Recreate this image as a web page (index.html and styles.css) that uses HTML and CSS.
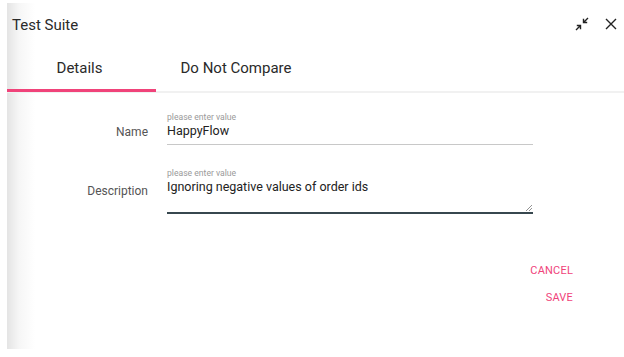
FILE: index.html
```html
<!DOCTYPE html>
<html>
<head>
<meta charset="utf-8">
<link rel="stylesheet" href="styles.css">
</head>
<body>
<div class="panel">
  <div class="header">
    <div class="title">Test Suite</div>
    <div class="actions">
      <svg class="icon" width="14" height="14" viewBox="0 0 14 14">
        <path d="M13 1 L8.5 5.5 M8.5 1.8 V5.5 H12.2" fill="none" stroke="#222" stroke-width="1.4"/>
        <path d="M1 13 L5.5 8.5 M1.8 8.5 H5.5 V12.2" fill="none" stroke="#222" stroke-width="1.4"/>
      </svg>
      <svg class="icon close" width="12" height="12" viewBox="0 0 12 12">
        <path d="M1 1 L11 11 M11 1 L1 11" stroke="#222" stroke-width="1.4"/>
      </svg>
    </div>
  </div>
  <div class="tabs">
    <div class="tab active">Details</div>
    <div class="tab">Do Not Compare</div>
  </div>
  <div class="form">
    <div class="row">
      <div class="label">Name</div>
      <div class="field">
        <div class="hint">please enter value</div>
        <div class="input">HappyFlow</div>
      </div>
    </div>
    <div class="row row2">
      <div class="label">Description</div>
      <div class="field">
        <div class="hint">please enter value</div>
        <div class="textarea">Ignoring negative values of order ids
          <svg class="grip" width="6" height="6" viewBox="0 0 6 6"><path d="M0 6 L6 0 M3 6 L6 3" stroke="#777" stroke-width="0.8"/></svg>
        </div>
      </div>
    </div>
  </div>
  <div class="buttons">
    <div class="btn">CANCEL</div>
    <div class="btn">SAVE</div>
  </div>
</div>
</body>
</html>
```

FILE: styles.css
```css
html, body {
  margin: 0;
  padding: 0;
  background: #fff;
}
body {
  font-family: Roboto, "Liberation Sans", sans-serif;
  color: #212121;
}
.panel {
  margin: 3px 0 0 7px;
  height: 346px;
  background: linear-gradient(to right, #e4e4e4 0px, #f6f6f6 12px, #fff 28px);
}
.header {
  display: flex;
  align-items: center;
  justify-content: space-between;
  height: 42px;
  padding: 0 7px 0 5px;
}
.title {
  font-size: 15px;
  color: #2a2a2a;
  margin-top: 1px;
}
.actions {
  display: flex;
  align-items: center;
  gap: 16px;
}
.icon { display: block; }
.tabs {
  display: flex;
  height: 46px;
  border-bottom: 2px solid #f1f1f1;
}
.tab {
  width: 149px;
  font-size: 15px;
  color: #2a2a2a;
  display: flex;
  align-items: center;
  justify-content: center;
  box-sizing: border-box;
  border-bottom: 3px solid transparent;
  margin-bottom: -1px;
  padding-top: 2px;
}
.tab:first-child { padding-right: 4px; }
.tab + .tab { width: 160px; }
.tab.active {
  border-bottom-color: #f0437a;
}
.form {
  padding-top: 20px;
}
.row {
  display: flex;
  align-items: flex-end;
}
.label {
  width: 141px;
  text-align: right;
  font-size: 12px;
  color: #555;
  padding-right: 19px;
  padding-bottom: 6px;
}
.field {
  width: 366px;
}
.hint {
  font-size: 8.6px;
  color: #9a9a9a;
  line-height: 10px;
  margin-top: -1px;
  padding-bottom: 1px;
}
.input {
  font-size: 12.5px;
  color: #222;
  padding: 0 0 6px;
  border-bottom: 1px solid #c8c8c8;
  line-height: 15px;
}
.row2 {
  margin-top: 24px;
  align-items: flex-start;
}
.row2 .label {
  padding-top: 15px;
}
.textarea {
  position: relative;
  font-size: 12.5px;
  color: #222;
  line-height: 15px;
  padding-top: 0;
  height: 33px;
  border-bottom: 2px solid #37474f;
}
.grip {
  position: absolute;
  right: 1px;
  bottom: 1px;
}
.buttons {
  display: flex;
  flex-direction: column;
  align-items: flex-end;
  padding-right: 51px;
  margin-top: 50px;
  gap: 13px;
}
.btn {
  font-size: 11px;
  color: #f0437a;
  letter-spacing: 0.2px;
  line-height: 14px;
}
```
